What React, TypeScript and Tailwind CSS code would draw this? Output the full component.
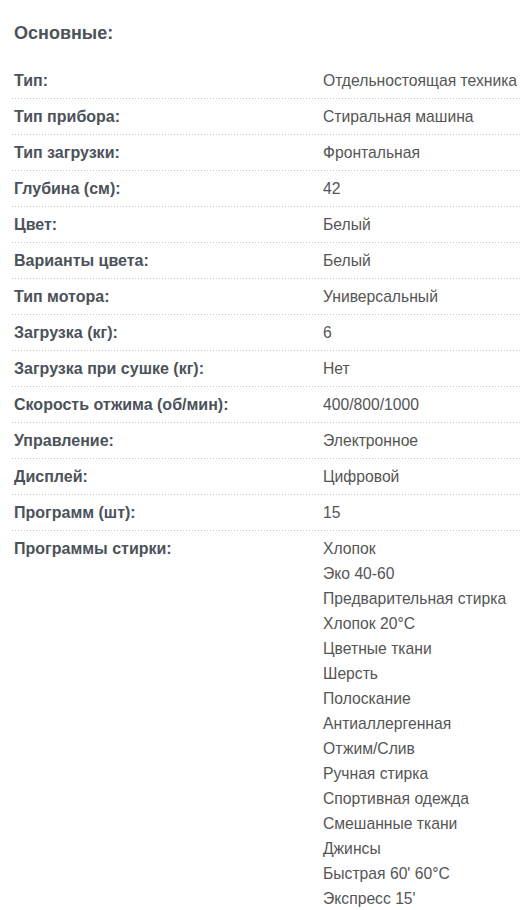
import React from "react";

const rows: [string, string[]][] = [
  ["Тип:", ["Отдельностоящая техника"]],
  ["Тип прибора:", ["Стиральная машина"]],
  ["Тип загрузки:", ["Фронтальная"]],
  ["Глубина (см):", ["42"]],
  ["Цвет:", ["Белый"]],
  ["Варианты цвета:", ["Белый"]],
  ["Тип мотора:", ["Универсальный"]],
  ["Загрузка (кг):", ["6"]],
  ["Загрузка при сушке (кг):", ["Нет"]],
  ["Скорость отжима (об/мин):", ["400/800/1000"]],
  ["Управление:", ["Электронное"]],
  ["Дисплей:", ["Цифровой"]],
  ["Программ (шт):", ["15"]],
  [
    "Программы стирки:",
    [
      "Хлопок",
      "Эко 40-60",
      "Предварительная стирка",
      "Хлопок 20°C",
      "Цветные ткани",
      "Шерсть",
      "Полоскание",
      "Антиаллергенная",
      "Отжим/Слив",
      "Ручная стирка",
      "Спортивная одежда",
      "Смешанные ткани",
      "Джинсы",
      "Быстрая 60' 60°C",
      "Экспресс 15'",
    ],
  ],
];

export default function App() {
  return (
    <div className="bg-white w-[524px] h-[910px] overflow-hidden pl-3 pr-1 pt-[21px] font-['Liberation_Sans',Arial,sans-serif]">
      <div className="text-[18px] leading-[24px] font-bold text-[#4c525a] pl-[2px] mb-[18px]">
        Основные:
      </div>
      <div>
        {rows.map(([label, values], i) => (
          <div key={i}>
            <div className="flex py-[5px]">
              <div className="w-[311px] shrink-0 pl-[2px] text-[16px] leading-[25px] font-bold text-[#4c525a] whitespace-nowrap">
                {label}
              </div>
              <div className="flex flex-col text-[15.7px] leading-[25px] text-[#555555] whitespace-nowrap">
                {values.map((v, j) => (
                  <div key={j}>{v}</div>
                ))}
              </div>
            </div>
            {i < rows.length - 1 && (
              <div className="h-px bg-[linear-gradient(to_right,#c8c8c8_1px,transparent_1px)] bg-[length:3px_1px] bg-repeat-x" />
            )}
          </div>
        ))}
      </div>
    </div>
  );
}
